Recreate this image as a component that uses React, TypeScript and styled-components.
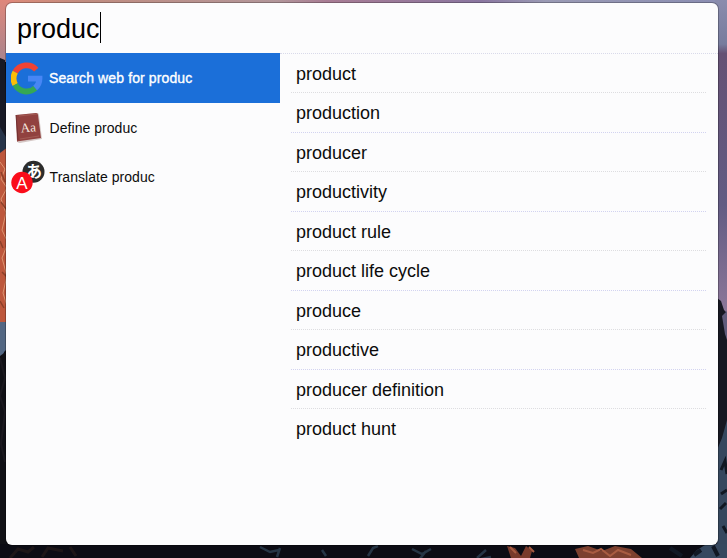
import React from "react";
import styled, { createGlobalStyle } from "styled-components";

const GlobalStyle = createGlobalStyle`
  * { box-sizing: border-box; }
  body { margin: 0; overflow: hidden; font-family: "Liberation Sans", Arial, sans-serif; }
`;

const Desktop = styled.div`
  position: relative;
  width: 727px;
  height: 558px;
  padding: 3px 9px 13px 6px;
  overflow: hidden;
  background: #0b0c14;
`;

const WallpaperSvg = styled.svg`
  position: absolute;
  inset: 0;
  width: 727px;
  height: 558px;
`;

const Panel = styled.main`
  position: relative;
  display: flex;
  flex-direction: column;
  width: 712px;
  height: 542px;
  border-radius: 6px;
  overflow: hidden;
  background: #fcfcfd;
  box-shadow: 0 0 0 1px rgba(0, 0, 0, 0.25);
  color: #0c0c0c;
`;

const SearchBar = styled.header`
  display: flex;
  align-items: flex-start;
  flex: none;
  height: 50px;
  padding: 9px 0 0 11px;
`;

const Query = styled.span`
  padding-top: 2px;
  font-size: 27px;
  line-height: 30px;
  color: #000;
`;

const Caret = styled.span`
  width: 1px;
  height: 31px;
  background: #000;
`;

const Content = styled.div`
  display: flex;
  flex: 1;
`;

const Actions = styled.nav`
  width: 274px;
  flex: none;
`;

const Action = styled.div<{ $active?: boolean }>`
  display: flex;
  align-items: center;
  height: ${(p) => (p.$active ? 50 : 49)}px;
  padding-left: 5px;
  font-size: 14px;
  letter-spacing: ${(p) => (p.$active ? 0.12 : 0.04)}px;
  color: ${(p) => (p.$active ? "#fff" : "#0c0c0c")};
  background: ${(p) => (p.$active ? "#1b6fd9" : "transparent")};
  -webkit-text-stroke: ${(p) => (p.$active ? "0.35px #fff" : "0")};
`;

const ActionLabel = styled.span<{ $active?: boolean }>`
  margin-left: ${(p) => (p.$active ? 4 : 4.6)}px;
  white-space: nowrap;
`;

const ActionIcon = styled.svg`
  display: block;
  flex: none;
  width: 34px;
  height: 36px;
`;

const Suggestions = styled.section`
  flex: 1;
  padding: 0 12px 0 11px;
  border-top: 1px dotted #d9daea;
`;

const Suggestion = styled.div`
  height: 39.45px;
  padding-left: 5px;
  font-size: 18px;
  line-height: 40px;
  border-bottom: 1px dotted #d2d3f0;

  &:nth-child(2n + 1) { border-bottom-color: #dddde0; }
  &:last-child { border-bottom: 0; }
`;

const Wallpaper = () => (
  <WallpaperSvg viewBox="0 0 727 558" aria-hidden="true">
    <defs>
      <linearGradient id="sky" x1="0" x2="1" y1="0" y2="0">
        <stop offset="0" stopColor="#df8a78" />
        <stop offset=".12" stopColor="#c08c80" />
        <stop offset=".38" stopColor="#b2969a" />
        <stop offset=".45" stopColor="#a87c94" />
        <stop offset=".66" stopColor="#8a76a0" />
        <stop offset=".75" stopColor="#9a9ab4" />
        <stop offset="1" stopColor="#8a8db2" />
      </linearGradient>
      <linearGradient id="dawn" x1="0" x2="0" y1="0" y2="1">
        <stop offset="0" stopColor="#df877b" />
        <stop offset="1" stopColor="#a8848d" />
      </linearGradient>
      <linearGradient id="dusk" x1="0" x2="0" y1="0" y2="1">
        <stop offset="0" stopColor="#8a8cad" />
        <stop offset=".14" stopColor="#777c9d" />
        <stop offset=".17" stopColor="#655174" />
        <stop offset=".65" stopColor="#625b83" />
        <stop offset="1" stopColor="#8d7899" />
      </linearGradient>
    </defs>
    <rect width="727" height="12" fill="url(#sky)" />
    <rect width="14" height="62" fill="url(#dawn)" />
    <path d="M0 58 5 60 8 150 0 160z" fill="#171925" />
    <path d="M0 127 4 134 8 140 8 160 0 154z" fill="#273449" />
    <path d="M0 153 8 147 8 322 0 322z" fill="#bd573c" />
    <path d="m0 162 5 7-4 10 6 9-6 11 5 14-4 17 6 13-6 15 5 18-4 17 5 16" fill="none" stroke="#dc9471" />
    <path d="m1 172 4 10m-4 20 5 7m-6 32 3 7m-1 24 5 5m-7 24 4 7" stroke="#8d4029" strokeWidth="1.5" />
    <path d="M0 322h8v26l-4 4-1 5-3 1z" fill="#536783" />
    <path d="M0 356 8 350V558H0z" fill="#111116" />
    <path d="m0 358 5 20-5 18 5 16-4 32 4 18" fill="none" stroke="#1b191f" strokeWidth="2" />
    <rect x="715" width="12" height="315" fill="url(#dusk)" />
    <path d="m717 298 4 3 3 9 3 3V460l-5-3-5 8z" fill="#171822" />
    <path d="m722 316 3 18 2 6V311z" fill="#615c7c" />
    <path d="M717 450l5-12 5-18V558h-10z" fill="#36475e" />
    <path d="m721 470 4-9 2 13m-6 20 6-4m-7 19 6-6m-3 23 4 7m-10 19 7-5" fill="none" stroke="#111722" strokeWidth="3" />
    <path d="M0 544H727V558H0z" fill="#0c0c14" />
    <path d="m10 558 8-9 10 3 6-5m8 10 6-9 15 3m7-4 6 9" fill="none" stroke="#1d1618" strokeWidth="3" />
    <path d="m260 547 10 5 9-2m-2 7 3-9m88 8 5-8 5-2m-56 4 4 6m86-7 10 5 9-5m-12 11 7-9m51 7 9-8m-9 10 14-3" fill="none" stroke="#263545" strokeWidth="2.5" />
    <path d="m507 546 8 2 6 8 5-10 6 5-2 7h-19z" fill="#783a2b" />
    <path d="m575 549 13-3 14 5 13-5 16 3 11 9h-63z" fill="#7c402f" />
    <path d="m583 550 10 3 8-4 9 7 8-6 13 5m-121-8 6 6m13-6 5 5" fill="none" stroke="#a85c42" strokeWidth="2" />
    <path d="m690 558 7-8 8-5 22-2v15z" fill="#36485f" />
    <path d="m670 548 12 8m31-10 5 10m-24-1 7-5" stroke="#111824" strokeWidth="4" />
  </WallpaperSvg>
);

const GoogleIcon = () => (
  <ActionIcon viewBox="0 0 34 36">
    <g fill="none" strokeWidth="5.8">
      <path d="M4.2 12.2A13 13 0 0 1 25.3 9.6" stroke="#ef4335" />
      <path d="M4.2 24.6A13 13 0 0 1 4.2 12.2" stroke="#fbbd08" />
      <path d="M24.3 28.2A13 13 0 0 1 4.2 24.6" stroke="#35a854" />
      <path d="M17 18.6H28.5A12.5 12.5 0 0 1 24.1 28" stroke="#4786f5" />
    </g>
  </ActionIcon>
);

const DictionaryIcon = () => (
  <ActionIcon viewBox="0 0 34 36">
    <path d="m5 5 21-2q2 0 2 2l3 24-22 4q-3 0-3-3z" fill="#d5c8c6" />
    <path d="m5 5 20-2q2 0 2 2l3 23-21 3q-3 0-3 1z" fill="#91413f" />
    <path d="m5 5 2 25" stroke="#722f31" />
    <path d="m8 6 18-2m-17 25 19-3" stroke="#ad6b61" strokeWidth=".6" />
    <text x="17.3" y="22" textAnchor="middle" fontFamily="Liberation Serif, serif" fontSize="13" fill="#f3e5df" transform="rotate(-5 17 18)">Aa</text>
  </ActionIcon>
);

const TranslateIcon = () => (
  <ActionIcon viewBox="0 0 34 36">
    <circle cx="22.5" cy="12.8" r="11" fill="#2c2c2c" />
    <text x="23" y="18.3" textAnchor="middle" fontFamily="Noto Sans CJK JP, sans-serif" fontWeight="700" fontSize="16" fill="#fff">あ</text>
    <circle cx="11" cy="23.5" r="10.7" fill="#fa0d1b" />
    <text x="11" y="29.5" textAnchor="middle" fontFamily="Liberation Sans, sans-serif" fontSize="17" fill="#fff">A</text>
  </ActionIcon>
);

const suggestions = [
  "product", "production", "producer", "productivity", "product rule",
  "product life cycle", "produce", "productive", "producer definition", "product hunt",
];

export default function App() {
  return (
    <Desktop>
      <GlobalStyle />
      <Wallpaper />
      <Panel>
        <SearchBar><Query>produc</Query><Caret /></SearchBar>
        <Content>
          <Actions>
            <Action $active><GoogleIcon /><ActionLabel $active>Search web for produc</ActionLabel></Action>
            <Action><DictionaryIcon /><ActionLabel>Define produc</ActionLabel></Action>
            <Action><TranslateIcon /><ActionLabel>Translate produc</ActionLabel></Action>
          </Actions>
          <Suggestions>
            {suggestions.map((item) => <Suggestion key={item}>{item}</Suggestion>)}
          </Suggestions>
        </Content>
      </Panel>
    </Desktop>
  );
}
